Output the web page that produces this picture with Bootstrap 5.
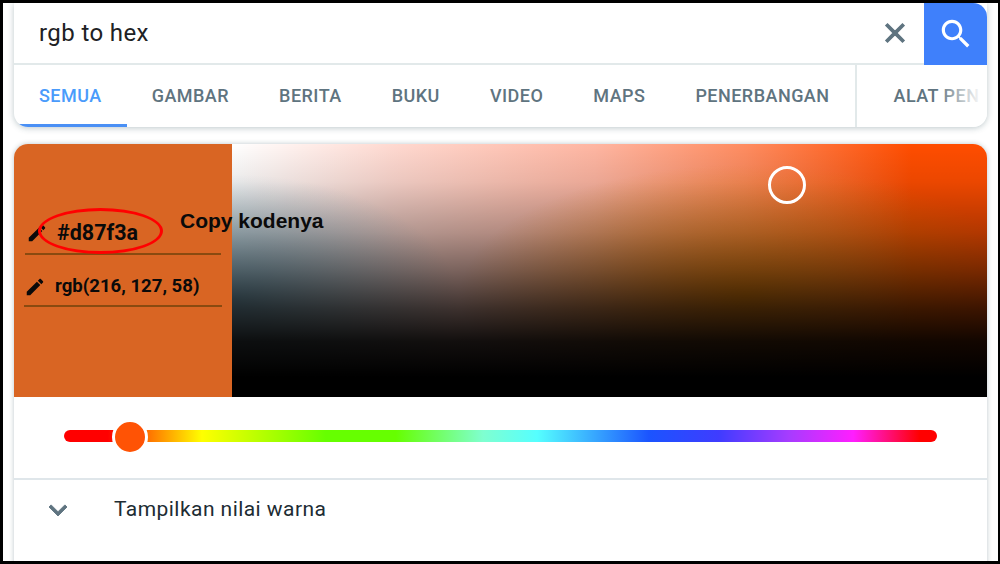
<!DOCTYPE html>
<html lang="en">
<head>
    <meta charset="UTF-8">
    <meta name="viewport" content="width=device-width, initial-scale=1.0">
    <title>rgb to hex</title>
    <link href="https://cdn.jsdelivr.net/npm/bootstrap@5.3.0/dist/css/bootstrap.min.css" rel="stylesheet">
    <style>
        body {
            margin: 0;
            background: #fff;
            font-family: Roboto, "Liberation Sans", sans-serif;
        }
        .shot-frame {
            width: 1000px;
            height: 564px;
            border: solid #000;
            border-width: 3px 2px 3px 3px;
            padding: 0 11px 0 11px;
            overflow: hidden;
            position: relative;
            background: #fff;
        }
        .search-card {
            height: 124px;
            background: #fff;
            border-radius: 0 0 14px 14px;
            box-shadow: 0 1px 6px rgba(32, 70, 80, .3);
            overflow: hidden;
        }
        .search-row {
            height: 62px;
            border-bottom: 2px solid #e2e9ea;
        }
        .search-text {
            padding-left: 25px;
            font-size: 24px;
            letter-spacing: .4px;
            color: #202124;
        }
        .clear-icon {
            width: 32px;
            height: 32px;
            margin-right: 13px;
            fill: #5f7480;
            stroke: #5f7480;
            stroke-width: .8;
        }
        .search-btn {
            width: 63px;
            height: 62px;
            background: #3f80fb;
            border-top-right-radius: 14px;
        }
        .search-btn svg {
            width: 38px;
            height: 38px;
            fill: #fff;
        }
        .tabs-row {
            height: 62px;
            position: relative;
            white-space: nowrap;
        }
        .tab-item {
            padding: 0 25px;
            height: 62px;
            line-height: 62px;
            font-size: 18px;
            font-weight: 500;
            letter-spacing: .47px;
            color: #5f7480;
            flex: none;
        }
        .tab-active {
            color: #4a9bfb;
            border-bottom: 3px solid #4a90f5;
            border-radius: 0 0 0 6px;
        }
        .tab-last {
            padding-left: 37px;
            padding-right: 0;
            border-left: 2px solid #e2e9ea;
        }
        .tabs-fade {
            position: absolute;
            top: 0;
            right: 0;
            width: 50px;
            height: 100%;
            background: linear-gradient(to right, rgba(255, 255, 255, 0), #fff 90%);
        }
        .picker-card {
            margin-top: 17px;
            height: 430px;
            background: #fff;
            border-radius: 14px 14px 0 0;
            box-shadow: 0 0 5px rgba(32, 70, 80, .3);
            overflow: hidden;
        }
        .picker-top {
            height: 253px;
        }
        .value-panel {
            width: 218px;
            flex: none;
            padding: 65px 10px 0;
            background: #d96523;
            color: #0a0a0a;
            font-weight: 700;
        }
        .value-row {
            border-bottom: 2px solid #8a4a10;
            gap: 9px;
        }
        .value-row svg {
            width: 22px;
            height: 22px;
            flex: none;
            fill: #0a0a0a;
        }
        .hex-row {
            height: 46px;
            font-size: 21.5px;
            padding-left: 1px;
            padding-top: 4px;
            margin: 0 1px;
            gap: 9px;
        }
        .rgb-row {
            height: 52px;
            font-size: 18.6px;
            padding-top: 14px;
        }
        .sat-area {
            flex: 1;
            position: relative;
            background:
                linear-gradient(to bottom, rgba(0, 0, 0, 0) 0%, rgba(0, 0, 0, .08) 15%, rgba(0, 0, 0, .3) 35%, rgba(0, 0, 0, .52) 50%, rgba(0, 0, 0, .76) 65%, rgba(0, 0, 0, .93) 78%, #000 92%),
                radial-gradient(ellipse 38% 52% at 68% 60%, rgba(235, 130, 0, .9), rgba(235, 130, 0, 0)),
                radial-gradient(ellipse 30% 50% at 0% 62%, rgba(110, 165, 190, .85), rgba(110, 165, 190, 0)),
                linear-gradient(to right, #fff 0%, #ffd8cf 22%, #ffb6a2 48%, #ff8c60 68%, #ff4d00 90%);
        }
        .sat-marker {
            position: absolute;
            left: 536px;
            top: 22px;
            width: 38px;
            height: 38px;
            border: 3px solid #fff;
            border-radius: 50%;
        }
        .hue-wrap {
            height: 83px;
            padding: 33px 50px 0;
            border-bottom: 2px solid #dfe6ea;
        }
        .hue-track {
            height: 12px;
            border-radius: 6px;
            position: relative;
            background: linear-gradient(to right, #f00 0%, #f00 5%, #ff7a00 10%, #ff0 15.8%, #6f0 30%, #6f0 38%, #7fffd0 48%, #5ff 54.2%, #1b54ff 67%, #3f3cff 75%, #a63cff 83%, #ff1eff 90.4%, #f00 98%);
        }
        .hue-thumb {
            position: absolute;
            left: 48px;
            top: -11px;
            width: 36px;
            height: 36px;
            border: 3px solid #fff;
            border-radius: 50%;
            background: #ff5305;
        }
        .more-row {
            height: 60px;
            padding-left: 26px;
            gap: 38px;
            font-size: 21px;
            letter-spacing: .45px;
            color: #202c33;
        }
        .more-row svg {
            width: 36px;
            height: 36px;
            fill: #5f7480;
            stroke: #5f7480;
            stroke-width: .6;
        }
        .note-text {
            position: absolute;
            left: 177px;
            top: 202px;
            font-family: "Liberation Sans", Arial, sans-serif;
            font-size: 21px;
            font-weight: 700;
            color: #0a0a0a;
        }
        .note-ring {
            position: absolute;
            left: 35px;
            top: 205px;
            width: 125px;
            height: 46px;
            border: 3px solid #f00;
            border-radius: 50%;
        }
    </style>
</head>
<body>
    <div class="shot-frame">
        <div class="search-card">
            <div class="search-row d-flex align-items-center">
                <div class="search-text flex-grow-1">rgb to hex</div>
                <svg class="clear-icon" viewBox="0 0 24 24"><path d="M19 6.41L17.59 5 12 10.59 6.41 5 5 6.41 10.59 12 5 17.59 6.41 19 12 13.41 17.59 19 19 17.59 13.41 12 19 6.41z"/></svg>
                <div class="search-btn d-flex align-self-start align-items-center justify-content-center">
                    <svg viewBox="0 0 24 24"><path d="M15.5 14h-.79l-.28-.27C15.41 12.59 16 11.11 16 9.5 16 5.91 13.09 3 9.5 3S3 5.91 3 9.5 5.91 16 9.5 16c1.61 0 3.09-.59 4.23-1.57l.27.28v.79l5 4.99L20.49 19l-4.99-5zm-6 0C7.01 14 5 11.99 5 9.5S7.01 5 9.5 5 14 7.01 14 9.5 11.99 14 9.5 14z"/></svg>
                </div>
            </div>
            <div class="tabs-row d-flex">
                <div class="tab-item tab-active">SEMUA</div>
                <div class="tab-item">GAMBAR</div>
                <div class="tab-item">BERITA</div>
                <div class="tab-item">BUKU</div>
                <div class="tab-item">VIDEO</div>
                <div class="tab-item">MAPS</div>
                <div class="tab-item">PENERBANGAN</div>
                <div class="tab-item tab-last">ALAT PEN</div>
                <div class="tabs-fade"></div>
            </div>
        </div>

        <div class="picker-card">
            <div class="picker-top d-flex">
                <div class="value-panel">
                    <div class="value-row hex-row d-flex align-items-center">
                        <svg viewBox="0 0 24 24"><path d="M3 17.25V21h3.75L17.81 9.94l-3.75-3.75L3 17.25zM20.71 7.04c.39-.39.39-1.02 0-1.41l-2.34-2.34c-.39-.39-1.02-.39-1.41 0l-1.83 1.83 3.75 3.75 1.83-1.83z"/></svg>
                        <span>#d87f3a</span>
                    </div>
                    <div class="value-row rgb-row d-flex align-items-center">
                        <svg viewBox="0 0 24 24"><path d="M3 17.25V21h3.75L17.81 9.94l-3.75-3.75L3 17.25zM20.71 7.04c.39-.39.39-1.02 0-1.41l-2.34-2.34c-.39-.39-1.02-.39-1.41 0l-1.83 1.83 3.75 3.75 1.83-1.83z"/></svg>
                        <span>rgb(216, 127, 58)</span>
                    </div>
                </div>
                <div class="sat-area">
                    <div class="sat-marker"></div>
                </div>
            </div>
            <div class="hue-wrap">
                <div class="hue-track">
                    <div class="hue-thumb"></div>
                </div>
            </div>
            <div class="more-row d-flex align-items-center">
                <svg viewBox="0 0 24 24"><path d="M16.59 8.59L12 13.17 7.41 8.59 6 10l6 6 6-6z"/></svg>
                <span>Tampilkan nilai warna</span>
            </div>
        </div>

        <div class="note-ring"></div>
        <div class="note-text">Copy kodenya</div>
    </div>

    <script src="https://cdn.jsdelivr.net/npm/bootstrap@5.3.0/dist/js/bootstrap.bundle.min.js"></script>
</body>
</html>
